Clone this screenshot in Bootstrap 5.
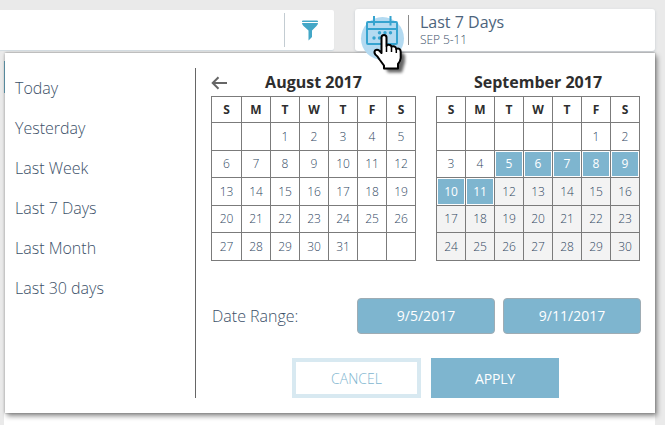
<!DOCTYPE html>
<html lang="en">
<head>
<meta charset="utf-8">
<title>Date range</title>
<meta name="viewport" content="width=device-width, initial-scale=1">
<link href="https://cdn.jsdelivr.net/npm/bootstrap@5.3.0/dist/css/bootstrap.min.css" rel="stylesheet">
<style>
body{width:665px;height:425px;background:#eaeaea;font-family:"Open Sans",sans-serif;color:#3b5068;font-weight:300;line-height:1}
.topbar{height:51px}
.search-box{width:334px;height:40px;margin-top:10px;border-radius:0 2px 2px 0;box-shadow:0 1px 1px #d3dce2}
.filter-btn{width:50px;height:34px;border-left:1px solid #c3ccd2}
.range-box{width:300px;height:42px;margin:9px 10px 0 0;border-radius:3px;box-shadow:0 1px 3px #c3cad0}
.range-text{height:30px;margin-left:53px;padding-left:11px;border-left:1px solid #8b8b8b}
.range-title{font-size:16px;line-height:14px;font-weight:400;color:#4d647c}
.range-sub{font-size:12px;line-height:12px;margin-top:5px;letter-spacing:-.1px}
.page-panel{margin:2px 10px 0 4px;height:372px}
.page-edge{width:1px;height:32px;margin-top:8px;background:#4d9fbc}
.picker{left:5px;top:53px;width:650px;height:360px;box-shadow:0 0 2px #777,2px 3px 5px rgba(0,0,0,.45)}
.presets{width:191px;height:330px;margin-top:15px;border-right:1px solid #666}
.presets a{height:40px;padding-left:10px;font-size:16px;color:#3b5068}
.picker-main{padding:15px 0 0 15px}
.month-title{height:28px;font-size:16px;font-weight:700;color:#2e2e2e;line-height:29px}
.month{color:#30475f;border-collapse:separate;border-spacing:0;table-layout:fixed;border-top:1px solid #7b7b7b;border-left:1px solid #7b7b7b;font-size:12px;line-height:12px;text-align:center}
.month th,.month td{width:29px;height:27px;padding:0;border-right:1px solid #7b7b7b;border-bottom:1px solid #7b7b7b;vertical-align:middle}
.month th{height:26px;color:#2e2e2e;font-weight:700}
.month tr:nth-child(odd) td{height:28px}
.aug{width:205px}.aug th:first-child{width:30px}
.sep{width:204px}
.month td.picked{background:#7eb5cf;color:#fff;font-weight:400;box-shadow:inset 0 0 0 1px #fff}
.month td.later{background:#f3f3f3}
.back{left:0;top:8px}
.date-row{margin-top:37px;height:36px}
.date-label{width:145px;margin-left:1px;font-size:16px}
.date-btn{width:138px;height:36px;padding:0;border:1px solid #9eacb4;border-radius:4px;background:#7eb5cf;color:#fff;font-size:14px;font-weight:400;line-height:34px}
.action{width:128px;height:40px;padding:0;border:0;border-radius:0;font-size:14px;line-height:41px}
.apply{background:#7eb5cf;color:#fff;font-weight:400;letter-spacing:-.2px}
.cancel{width:129px;margin-right:10px;border:4px solid #d8e9f1;color:#7eb5cf;line-height:33px;background:#fff}
.actions{padding-left:81px;margin-top:24px}
.cal-icon{left:358px;top:10px}
</style>
</head>
<body class="position-relative overflow-hidden m-0">
<div class="topbar d-flex justify-content-between">
  <div class="search-box bg-white d-flex align-items-center justify-content-end">
    <div class="filter-btn d-flex align-items-center justify-content-center">
      <svg width="18" height="22" viewBox="0 0 18 22"><path d="M1 2.5Q1 1.500 2 1.500H16Q17 1.500 17 2.500V3H1ZM1 4H17Q17 5.500 15.500 7L11 11.500V18L7.500 21.500V11.500L2.500 7Q1 5.500 1 4Z" fill="#43a7c7"/></svg>
    </div>
  </div>
  <div class="range-box bg-white d-flex align-items-center">
    <div class="range-text">
      <div class="range-title">Last 7 Days</div>
      <div class="range-sub">SEP 5-11</div>
    </div>
  </div>
</div>
<div class="page-panel bg-white overflow-hidden"><div class="page-edge"></div></div>

<div class="picker position-absolute bg-white d-flex">
  <div class="presets d-flex flex-column flex-shrink-0">
    <a class="d-flex align-items-center text-decoration-none">Today</a>
    <a class="d-flex align-items-center text-decoration-none">Yesterday</a>
    <a class="d-flex align-items-center text-decoration-none">Last Week</a>
    <a class="d-flex align-items-center text-decoration-none">Last 7 Days</a>
    <a class="d-flex align-items-center text-decoration-none">Last Month</a>
    <a class="d-flex align-items-center text-decoration-none">Last 30 days</a>
  </div>
  <div class="picker-main">
    <div class="d-flex">
      <div class="position-relative me-3 pe-1">
        <svg class="back position-absolute" width="17" height="14" viewBox="0 0 17 14"><path d="M7.500 1.200 1.700 7l5.800 5.800M2 7H16" fill="none" stroke="#666" stroke-width="2"/></svg>
        <div class="month-title text-center">August 2017</div>
        <table class="month aug">
          <thead><tr><th>S</th><th>M</th><th>T</th><th>W</th><th>T</th><th>F</th><th>S</th></tr></thead>
          <tbody>
          <tr><td></td><td></td><td>1</td><td>2</td><td>3</td><td>4</td><td>5</td></tr>
          <tr><td>6</td><td>7</td><td>8</td><td>9</td><td>10</td><td>11</td><td>12</td></tr>
          <tr><td>13</td><td>14</td><td>15</td><td>16</td><td>17</td><td>18</td><td>19</td></tr>
          <tr><td>20</td><td>21</td><td>22</td><td>23</td><td>24</td><td>25</td><td>26</td></tr>
          <tr><td>27</td><td>28</td><td>29</td><td>30</td><td>31</td><td></td><td></td></tr>
          </tbody>
        </table>
      </div>
      <div>
        <div class="month-title text-center">September 2017</div>
        <table class="month sep">
          <thead><tr><th>S</th><th>M</th><th>T</th><th>W</th><th>T</th><th>F</th><th>S</th></tr></thead>
          <tbody>
          <tr><td></td><td></td><td></td><td></td><td></td><td>1</td><td>2</td></tr>
          <tr><td>3</td><td>4</td><td class="picked">5</td><td class="picked">6</td><td class="picked">7</td><td class="picked">8</td><td class="picked">9</td></tr>
          <tr><td class="picked">10</td><td class="picked">11</td><td class="later">12</td><td class="later">13</td><td class="later">14</td><td class="later">15</td><td class="later">16</td></tr>
          <tr><td class="later">17</td><td class="later">18</td><td class="later">19</td><td class="later">20</td><td class="later">21</td><td class="later">22</td><td class="later">23</td></tr>
          <tr><td class="later">24</td><td class="later">25</td><td class="later">26</td><td class="later">27</td><td class="later">28</td><td class="later">29</td><td class="later">30</td></tr>
          </tbody>
        </table>
      </div>
    </div>
    <div class="date-row d-flex align-items-center">
      <div class="date-label">Date Range:</div>
      <button class="date-btn btn me-2">9/5/2017</button>
      <button class="date-btn btn">9/11/2017</button>
    </div>
    <div class="actions d-flex">
      <button class="action cancel btn fw-light">CANCEL</button>
      <button class="action apply btn">APPLY</button>
    </div>
  </div>
</div>

<!-- calendar icon with click highlight and hand pointer -->
<svg class="cal-icon position-absolute" width="60" height="70" viewBox="358 10 60 70">
  <defs><filter id="soft" x="-50%" y="-50%" width="200%" height="200%"><feGaussianBlur stdDeviation="1.8"/></filter></defs>
  <circle cx="382.500" cy="38.500" r="21.500" fill="#b3daf1"/>
  <g fill="none" stroke="#35a3cf" stroke-width="2">
    <rect x="367" y="22" width="30" height="22" rx="1"/>
    <path d="M367 29H397"/>
    <path d="M374 16V25.500M390.500 16V25.500"/>
  </g>
  <g fill="#35a3cf"><circle cx="379.500" cy="32.800" r="1.700"/><circle cx="385" cy="32.800" r="1.700"/><circle cx="390.500" cy="32.800" r="1.700"/><circle cx="374" cy="38" r="1.700"/><circle cx="379.500" cy="38" r="1.700"/></g>
  <path transform="translate(4 4)" filter="url(#soft)" opacity=".6" d="M383 45L386.500 46 398 48.500 401 51V58L398 68.500H384L378 57 383 55Z"/>
  <path d="M381.500 37.500Q381.500 35 384 35Q386.500 35 386.500 37.500V46Q387 44.500 389 44.800Q391.300 45 391.500 47Q392.500 45.700 394.500 46.500Q396 47 396.300 49Q398 47.800 399.500 49Q400.800 50 400.700 52V58Q400.500 61 398 64V68.500H384V65.500L379.500 59.500Q378 56.500 375.300 54.500Q373.800 52.200 375 50.500Q377 48.800 379.500 50.800L381.500 53Z" fill="#fff" stroke="#000" stroke-width="2" stroke-linejoin="round"/>
  <path d="M386.500 46V52M391.500 47.500V52M396.300 49V53" stroke="#000" stroke-width="1.500"/>
</svg>
<script src="https://cdn.jsdelivr.net/npm/bootstrap@5.3.0/dist/js/bootstrap.bundle.min.js"></script>
</body>
</html>
